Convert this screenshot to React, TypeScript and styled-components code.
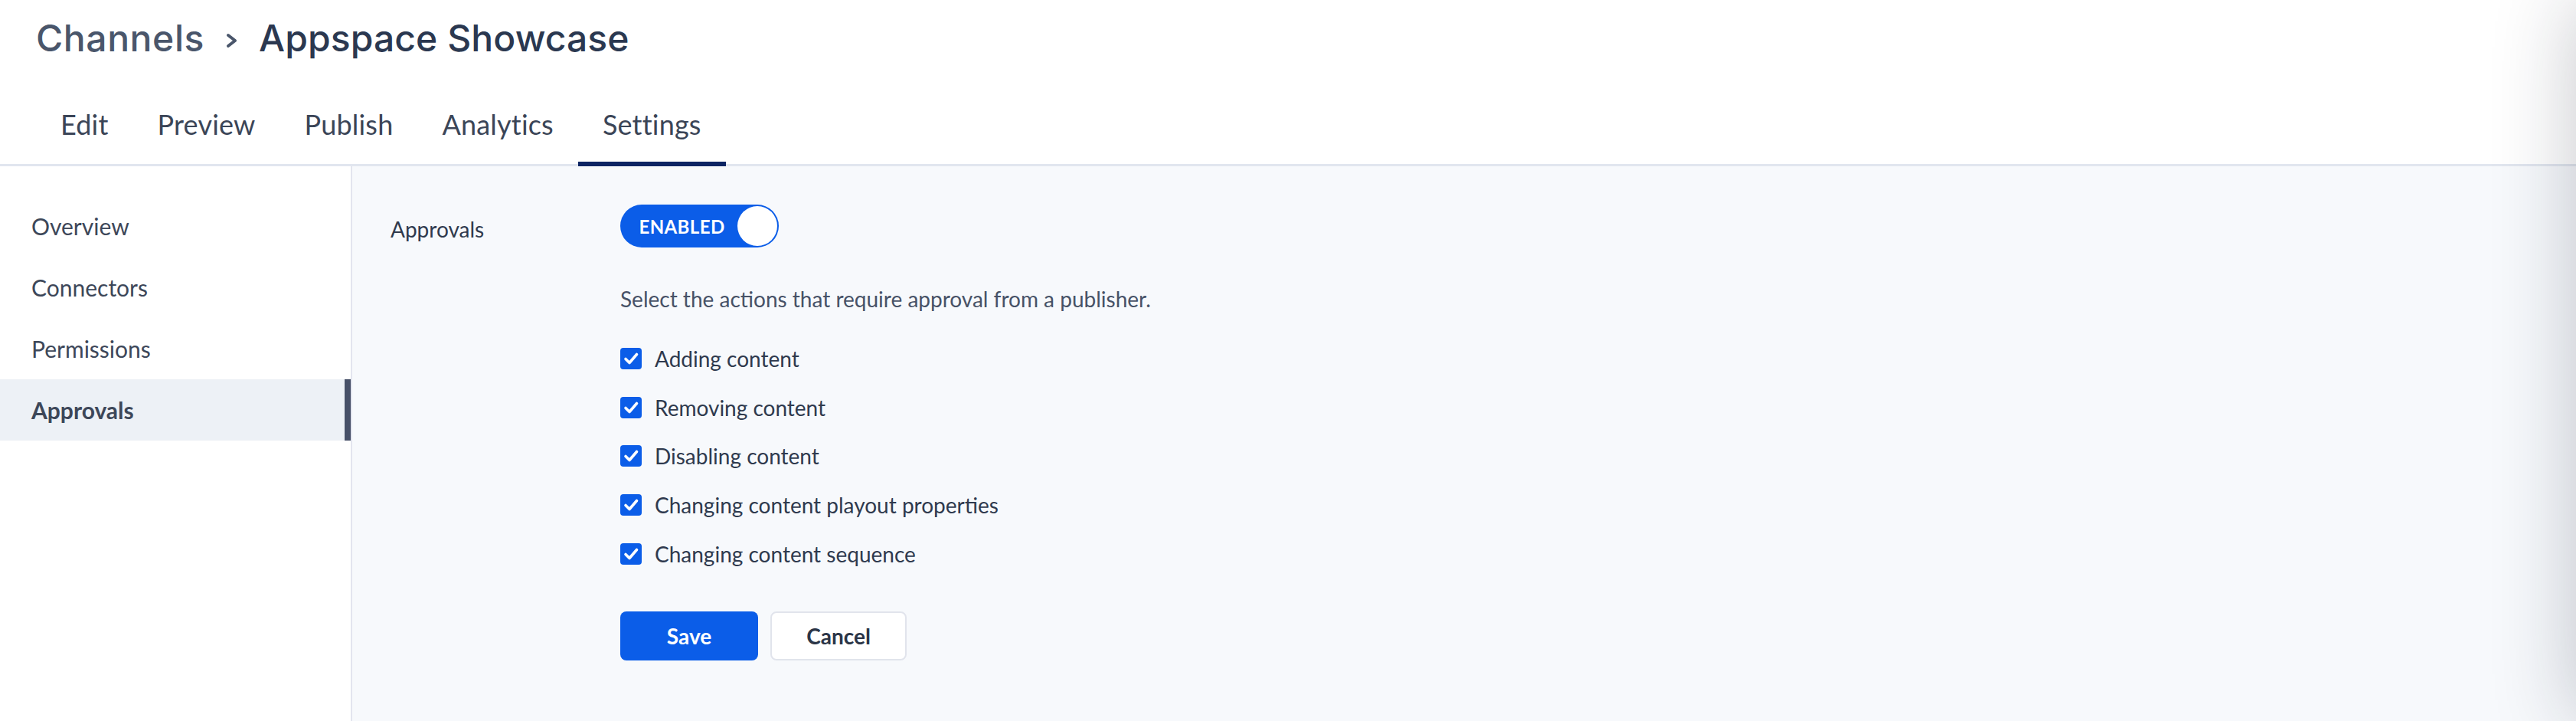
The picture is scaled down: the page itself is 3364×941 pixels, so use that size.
import React, { useState } from 'react';
import styled, { createGlobalStyle } from 'styled-components';

const GlobalStyle = createGlobalStyle`
    html, body {
        margin: 0;
        padding: 0;
        height: 100%;
    }

    body {
        font-family: Lato, "Liberation Sans", sans-serif;
        background: #ffffff;
        overflow: hidden;
    }

    #root {
        height: 100%;
    }
`;

const Page = styled.div`
    height: 100vh;
    display: flex;
    flex-direction: column;
`;

const Header = styled.header`
    padding: 20px 0 0 47px;
    background: #ffffff;
    border-bottom: 3px solid #e1e6ef;
`;

const Breadcrumb = styled.h1`
    margin: 0;
    height: 60px;
    display: flex;
    align-items: center;
    font-family: Inter, "Open Sans", sans-serif;
    font-size: 48px;
    line-height: 60px;
`;

const Crumb = styled.span<{ $current?: boolean }>`
    font-weight: 500;
    letter-spacing: ${p => (p.$current ? '0.1px' : '0.6px')};
    color: ${p => (p.$current ? '#2b3850' : '#4a566b')};
`;

const Chevron = styled.svg`
    width: 18px;
    height: 20px;
    margin: 6px 26px 0 27px;
`;

const TabBar = styled.nav`
    display: flex;
    margin-top: 62px;
`;

const Tab = styled.a<{ $active?: boolean }>`
    padding: 0 32px 29px;
    font-size: 36px;
    line-height: 40px;
    letter-spacing: 0.2px;
    color: #3b4557;
    border-bottom: 6px solid ${p => (p.$active ? '#0c2463' : 'transparent')};
    margin-bottom: -3px;
    cursor: pointer;
    position: relative;
`;

const Body = styled.div`
    flex: 1;
    display: flex;
    min-height: 0;
`;

const Sidebar = styled.aside`
    width: 458px;
    padding-top: 38px;
    background: #ffffff;
    border-right: 2px solid #e3e5ef;
    display: flex;
    flex-direction: column;
`;

const SideItem = styled.a<{ $active?: boolean }>`
    height: 80px;
    line-height: 80px;
    padding-left: 41px;
    font-size: 30px;
    font-weight: ${p => (p.$active ? 700 : 400)};
    color: #3d4759;
    background: ${p => (p.$active ? '#edf1f6' : 'transparent')};
    border-right: 8px solid ${p => (p.$active ? '#475068' : 'transparent')};
    cursor: pointer;
`;

const Main = styled.main`
    flex: 1;
    background: #f7f9fc;
    padding: 50px 0 0 50px;
`;

const SettingRow = styled.section`
    display: flex;
`;

const SettingLabel = styled.div`
    width: 300px;
    margin-top: 12px;
    font-size: 28px;
    line-height: 40px;
    color: #2f3a4e;
`;

const SettingBody = styled.div`
    display: flex;
    flex-direction: column;
    align-items: flex-start;
`;

const Toggle = styled.button<{ $on: boolean }>`
    width: 207px;
    height: 56px;
    padding: 2px;
    border: none;
    border-radius: 28px;
    background: ${p => (p.$on ? '#0b5de8' : '#a0aab8')};
    display: flex;
    align-items: center;
    flex-direction: ${p => (p.$on ? 'row' : 'row-reverse')};
    cursor: pointer;
`;

const ToggleText = styled.span`
    flex: 1;
    text-align: center;
    padding-left: 6px;
    font-family: Lato, sans-serif;
    font-size: 24px;
    font-weight: 700;
    letter-spacing: 0.4px;
    color: #ffffff;
`;

const Knob = styled.span`
    width: 52px;
    height: 52px;
    border-radius: 50%;
    background: #ffffff;
`;

const Hint = styled.p`
    margin: 47px 0 26px;
    font-size: 28px;
    line-height: 40px;
    color: #475267;
`;

const CheckList = styled.div`
    display: flex;
    flex-direction: column;
`;

const CheckRow = styled.label`
    height: 63.75px;
    display: flex;
    align-items: center;
    gap: 17px;
    font-size: 28px;
    line-height: 40px;
    color: #2f3a4e;
    cursor: pointer;
`;

const Box = styled.span<{ $checked: boolean }>`
    width: 28px;
    height: 28px;
    border-radius: 4px;
    box-sizing: border-box;
    background: ${p => (p.$checked ? '#0b5de8' : '#ffffff')};
    border: ${p => (p.$checked ? 'none' : '2px solid #b8c0cc')};
    display: flex;

    svg {
        width: 28px;
        height: 28px;
    }
`;

const Actions = styled.div`
    display: flex;
    gap: 16px;
    margin-top: 43px;
`;

const Button = styled.button<{ $primary?: boolean }>`
    height: 64px;
    width: ${p => (p.$primary ? '180px' : '178px')};
    border-radius: 8px;
    font-family: Lato, sans-serif;
    font-size: 28px;
    font-weight: 700;
    cursor: pointer;
    background: ${p => (p.$primary ? '#0b5de8' : '#ffffff')};
    color: ${p => (p.$primary ? '#ffffff' : '#2b3547')};
    border: ${p => (p.$primary ? 'none' : '2px solid #e1e4ec')};
`;

// shadow cast by a drawer sitting just off the right edge
const DrawerShadow = styled.div`
    position: fixed;
    top: 0;
    bottom: 0;
    left: 100%;
    width: 200px;
    box-shadow: 0 0 110px rgba(20, 26, 40, 0.24);
    pointer-events: none;
`;

const tabs = ['Edit', 'Preview', 'Publish', 'Analytics', 'Settings'];
const sections = ['Overview', 'Connectors', 'Permissions', 'Approvals'];
const actions = [
    'Adding content',
    'Removing content',
    'Disabling content',
    'Changing content playout properties',
    'Changing content sequence',
];

const Checkbox = ({ checked }: { checked: boolean }) => (
    <Box $checked={checked}>
        {checked && (
            <svg viewBox="0 0 28 28" fill="none">
                <path d="M7 14.5 L12 19.5 L21.5 8.5" stroke="#ffffff" strokeWidth="3.6" strokeLinecap="round" strokeLinejoin="round" />
            </svg>
        )}
    </Box>
);

export default function App() {
    const [enabled, setEnabled] = useState(true);
    const [checked, setChecked] = useState<boolean[]>(actions.map(() => true));

    return (
        <Page>
            <GlobalStyle />
            <Header>
                <Breadcrumb>
                    <Crumb>Channels</Crumb>
                    <Chevron viewBox="0 0 18 20" fill="none">
                        <path d="M4 3 L13 10 L4 17" stroke="#4a566b" strokeWidth="4" strokeLinecap="round" strokeLinejoin="round" />
                    </Chevron>
                    <Crumb $current>Appspace Showcase</Crumb>
                </Breadcrumb>
                <TabBar>
                    {tabs.map(t => (
                        <Tab key={t} $active={t === 'Settings'}>{t}</Tab>
                    ))}
                </TabBar>
            </Header>
            <Body>
                <Sidebar>
                    {sections.map(s => (
                        <SideItem key={s} $active={s === 'Approvals'}>{s}</SideItem>
                    ))}
                </Sidebar>
                <Main>
                    <SettingRow>
                        <SettingLabel>Approvals</SettingLabel>
                        <SettingBody>
                            <Toggle $on={enabled} onClick={() => setEnabled(!enabled)}>
                                <ToggleText>{enabled ? 'ENABLED' : 'DISABLED'}</ToggleText>
                                <Knob />
                            </Toggle>
                            <Hint>Select the actions that require approval from a publisher.</Hint>
                            <CheckList>
                                {actions.map((a, i) => (
                                    <CheckRow
                                        key={a}
                                        onClick={() => setChecked(checked.map((c, j) => (j === i ? !c : c)))}
                                    >
                                        <Checkbox checked={checked[i]} />
                                        {a}
                                    </CheckRow>
                                ))}
                            </CheckList>
                            <Actions>
                                <Button $primary>Save</Button>
                                <Button>Cancel</Button>
                            </Actions>
                        </SettingBody>
                    </SettingRow>
                </Main>
            </Body>
            <DrawerShadow />
        </Page>
    );
}
